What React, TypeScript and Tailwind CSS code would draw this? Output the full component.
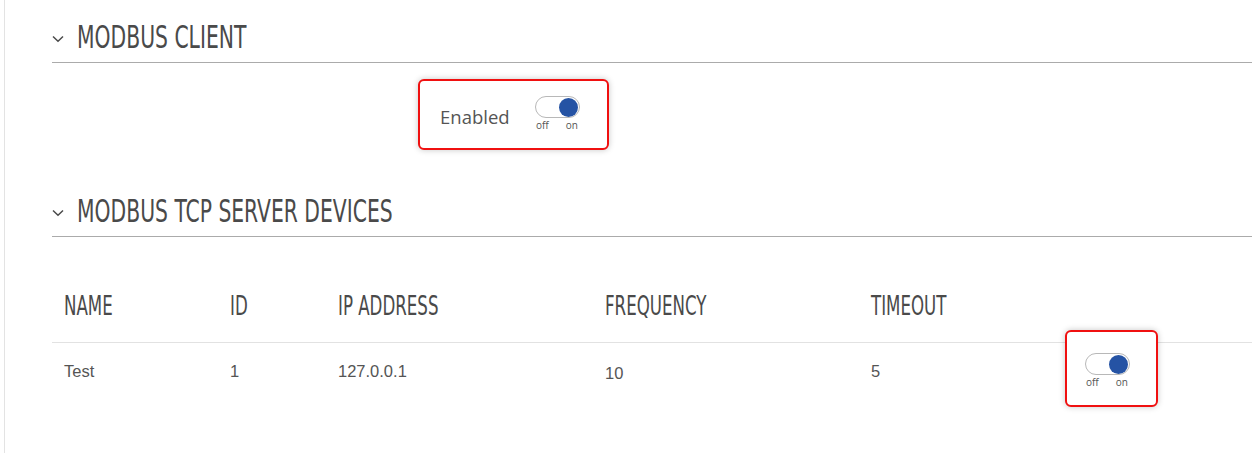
import React from "react";

const headFont = {
  fontFamily: '"Liberation Sans Narrow", "DejaVu Sans Condensed", "Liberation Sans", sans-serif',
};

function Chevron() {
  return (
    <svg width="12" height="8" viewBox="0 0 12 8" className="shrink-0">
      <path d="M1 1.5 L6 6.2 L11 1.5" fill="none" stroke="#4a4a4a" strokeWidth="1.5" />
    </svg>
  );
}

function SectionHeader({ title }: { title: string }) {
  return (
    <div className="flex items-center h-[51px] border-b border-[#ababab]">
      <div className="w-[25px] flex items-center pt-[3px]">
        <Chevron />
      </div>
      <span
        className="text-[22.6px] leading-none text-[#4a4a4a] origin-center scale-y-[1.45]"
        style={headFont}
      >
        {title}
      </span>
    </div>
  );
}

function Toggle() {
  return (
    <div className="flex flex-col items-center w-[45px]">
      <div className="w-[45px] h-[22px] rounded-full border border-[#b8b8b8] bg-white flex items-center justify-end pr-[1px]">
        <div className="w-[19px] h-[19px] rounded-full bg-[#2553a4]" />
      </div>
      <div className="flex w-full justify-between px-[1px] pr-[2px] mt-[1px] text-[10px] leading-[12px] text-[#555] font-['Open_Sans',sans-serif]">
        <span>off</span>
        <span>on</span>
      </div>
    </div>
  );
}

function Highlight({ children, className }: { children: React.ReactNode; className: string }) {
  return (
    <div
      className={
        "rounded-[6px] border-2 border-[#f01010] shadow-[0_0_6px_rgba(0,0,0,0.22)] bg-white " + className
      }
    >
      {children}
    </div>
  );
}

const thCls = "text-[18.5px] leading-none text-[#4a4a4a] px-3 origin-center scale-y-[1.4] inline-block";

export default function App() {
  return (
    <div className="w-[1252px] h-[453px] bg-white overflow-hidden">
      <div className="ml-[4px] h-full border-l border-[#e3e3e3] pl-[47px]">
        {/* MODBUS CLIENT */}
        <div className="pt-[12px]">
          <SectionHeader title="MODBUS CLIENT" />
        </div>
        <div className="pt-[16px] pl-[366px]">
          <Highlight className="w-[191px] h-[71px] flex items-center pl-[20px]">
            <span className="text-[18.5px] text-[#555] font-['Open_Sans',sans-serif] w-[95px] mt-[4px]">Enabled</span>
            <div className="-mt-[2px]">
              <Toggle />
            </div>
          </Highlight>
        </div>

        {/* MODBUS TCP SERVER DEVICES */}
        <div className="pt-[36px]">
          <SectionHeader title="MODBUS TCP SERVER DEVICES" />
        </div>

        <div className="grid grid-cols-[166px_108px_267px_266px_214px_1fr] mt-[36px]">
          {["NAME", "ID", "IP ADDRESS", "FREQUENCY", "TIMEOUT", ""].map((h, i) => (
            <div key={i} className="h-[70px] flex items-center border-b border-[#e2e2e2]">
              <span className={thCls} style={headFont}>
                {h}
              </span>
            </div>
          ))}
          {["Test", "1", "127.0.0.1", "10", "5"].map((c, i) => (
            <div
              key={i}
              className="h-[58px] flex items-center px-3 text-[16.5px] text-[#555] font-['Liberation_Sans',Arial,sans-serif]"
            >
              <span className={i === 3 ? "mt-[3px]" : "-mt-[1px]"}>{c}</span>
            </div>
          ))}
          <div className="h-[58px] flex items-start pt-[10px]">
            <div className="relative ml-[12px]">
              <Highlight className="absolute -left-[20px] -top-[23px] w-[93px] h-[77px]">
                <span />
              </Highlight>
              <div className="relative">
                <Toggle />
              </div>
            </div>
          </div>
        </div>
      </div>
    </div>
  );
}
